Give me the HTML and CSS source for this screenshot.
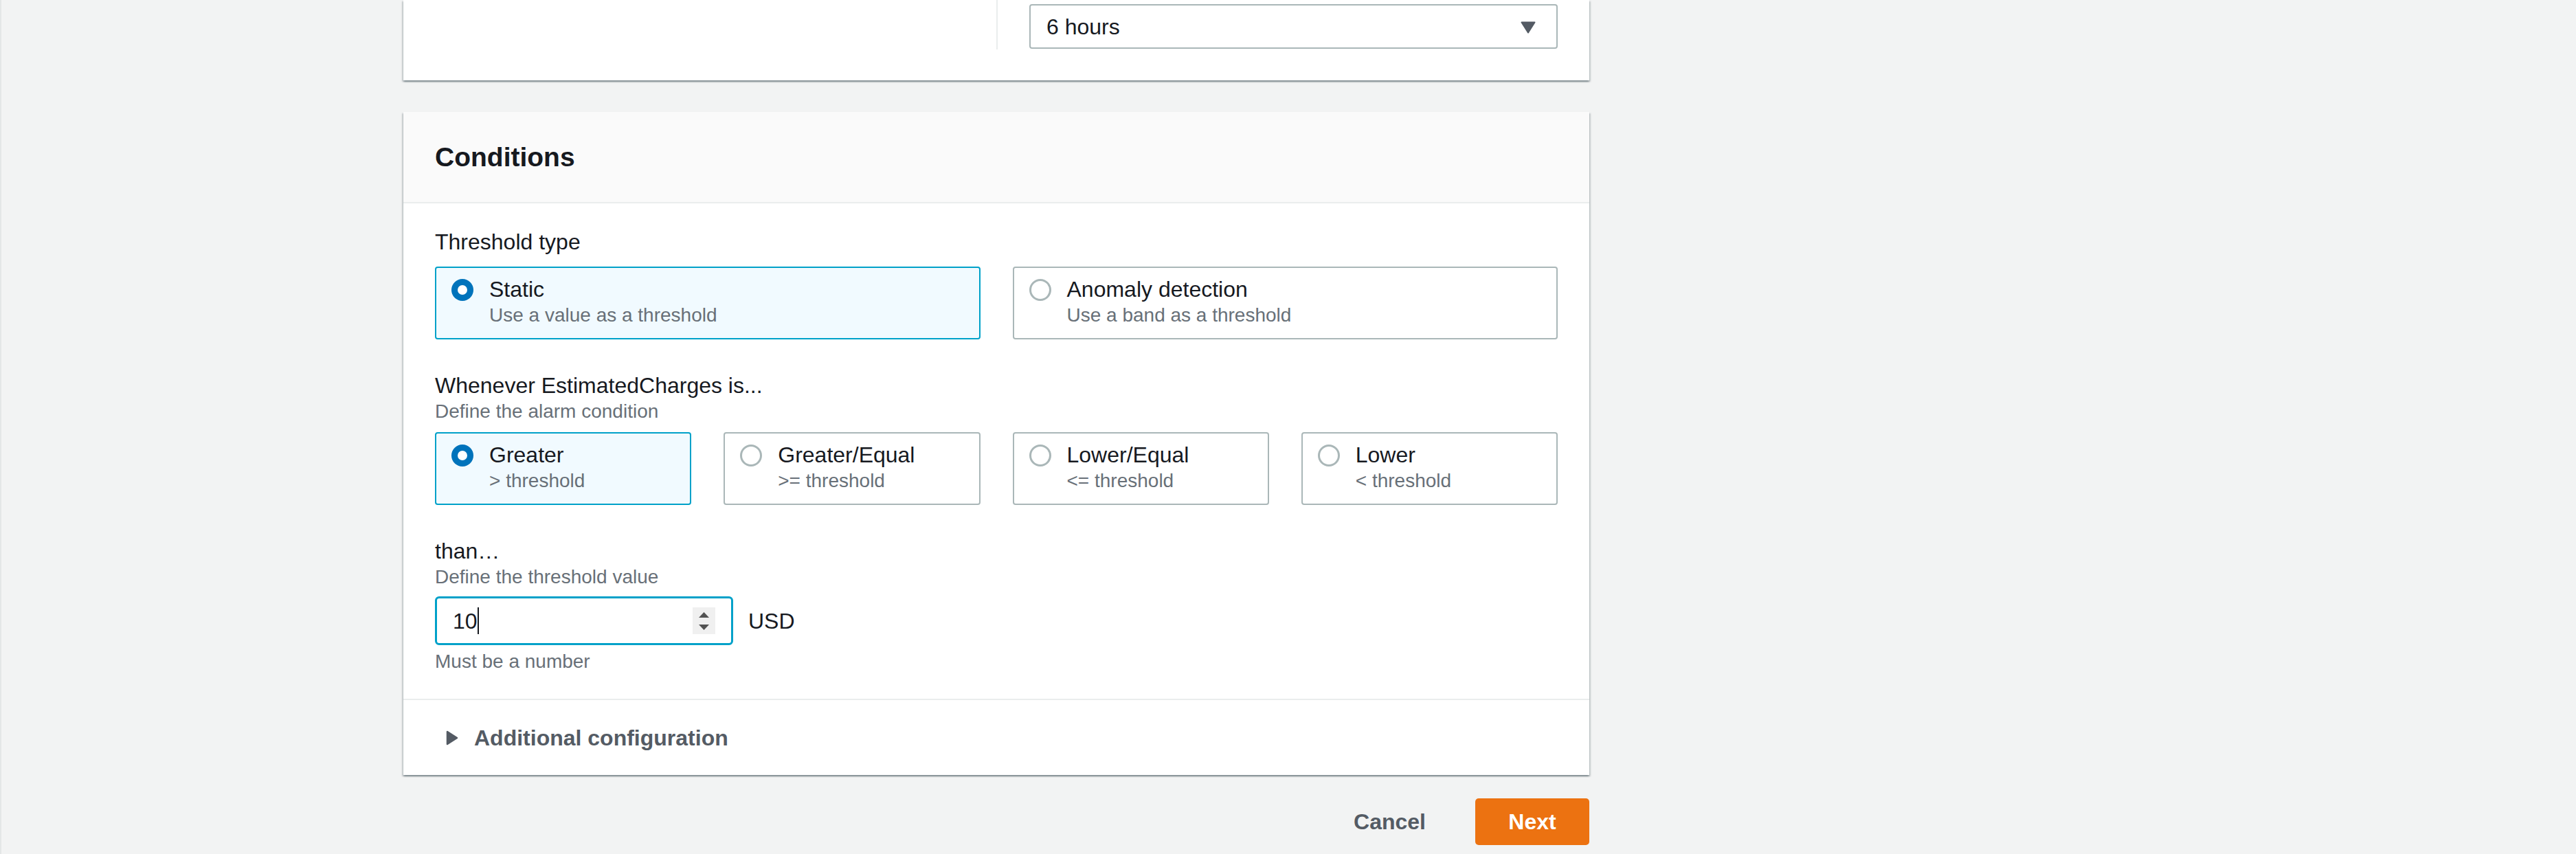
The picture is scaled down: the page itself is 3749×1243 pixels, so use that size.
FILE: index.html
```html
<!DOCTYPE html>
<html lang="en">
<head>
<meta charset="utf-8">
<title>Conditions</title>
<link rel="stylesheet" href="styles.css">
</head>
<body>
<div class="layout">
  <div class="nav-space"></div>
  <main class="main">
    <section class="card card-top">
      <div class="columns">
        <div class="col"></div>
        <div class="col col-divided">
          <div class="select">
            <span>6 hours</span>
            <svg class="select-arrow" viewBox="0 0 22 18" aria-hidden="true"><path d="M1.5 1.5 H20.5 L11 16.5 Z" fill="#545b64" stroke="#545b64" stroke-width="2" stroke-linejoin="round"/></svg>
          </div>
        </div>
      </div>
    </section>

    <section class="card card-conditions">
      <header class="card-header"><h2>Conditions</h2></header>
      <div class="card-body">
        <div class="field">
          <div class="label label-only">Threshold type</div>
          <div class="tiles tiles-2">
            <div class="tile selected">
              <span class="radio checked"></span>
              <div class="tile-text">
                <div class="tile-title">Static</div>
                <div class="tile-desc">Use a value as a threshold</div>
              </div>
            </div>
            <div class="tile">
              <span class="radio"></span>
              <div class="tile-text">
                <div class="tile-title">Anomaly detection</div>
                <div class="tile-desc">Use a band as a threshold</div>
              </div>
            </div>
          </div>
        </div>

        <div class="field">
          <div class="label">Whenever EstimatedCharges is...</div>
          <div class="desc desc-tiles">Define the alarm condition</div>
          <div class="tiles tiles-4">
            <div class="tile selected">
              <span class="radio checked"></span>
              <div class="tile-text">
                <div class="tile-title">Greater</div>
                <div class="tile-desc">&gt; threshold</div>
              </div>
            </div>
            <div class="tile">
              <span class="radio"></span>
              <div class="tile-text">
                <div class="tile-title">Greater/Equal</div>
                <div class="tile-desc">&gt;= threshold</div>
              </div>
            </div>
            <div class="tile">
              <span class="radio"></span>
              <div class="tile-text">
                <div class="tile-title">Lower/Equal</div>
                <div class="tile-desc">&lt;= threshold</div>
              </div>
            </div>
            <div class="tile">
              <span class="radio"></span>
              <div class="tile-text">
                <div class="tile-title">Lower</div>
                <div class="tile-desc">&lt; threshold</div>
              </div>
            </div>
          </div>
        </div>

        <div class="field">
          <div class="label">than…</div>
          <div class="desc desc-input">Define the threshold value</div>
          <div class="input-row">
            <div class="number-input">
              <span class="value">10</span><span class="caret"></span>
              <span class="spinner">
                <svg viewBox="0 0 15 8" class="spin-up" aria-hidden="true"><path d="M7.5 0 L15 8 H0 Z" fill="#525252"/></svg>
                <svg viewBox="0 0 15 8" class="spin-down" aria-hidden="true"><path d="M0 0 H15 L7.5 8 Z" fill="#525252"/></svg>
              </span>
            </div>
            <span class="unit">USD</span>
          </div>
          <div class="constraint">Must be a number</div>
        </div>
      </div>
      <div class="expander">
        <svg class="expander-icon" viewBox="0 0 18 22" aria-hidden="true"><path d="M2 2 L16 11 L2 20 Z" fill="#545b64" stroke="#545b64" stroke-width="2.5" stroke-linejoin="round"/></svg>
        <span class="expander-title">Additional configuration</span>
      </div>
    </section>

    <div class="actions">
      <button class="btn btn-link" type="button">Cancel</button>
      <button class="btn btn-primary" type="button">Next</button>
    </div>
  </main>
</div>
</body>
</html>
```

FILE: styles.css
```css
* { box-sizing: border-box; }

html, body {
  margin: 0;
  padding: 0;
  background: #f2f3f3;
  font-family: "Liberation Sans", Arial, sans-serif;
  color: #16191f;
  font-size: 32px;
}

.layout {
  display: flex;
  min-height: 1243px;
}

.nav-space {
  width: 587px;
  flex: none;
  border-left: 2px solid #e4e7e7;
}

.main {
  width: 1726px;
  flex: none;
  display: flex;
  flex-direction: column;
}

.card {
  background: #ffffff;
  box-shadow: 0 2px 2px 0 rgba(0, 28, 36, 0.3), 2px 2px 2px 0 rgba(0, 28, 36, 0.15), -2px 2px 2px 0 rgba(0, 28, 36, 0.15);
}

/* top (scrolled) card */
.card-top {
  padding: 0 46px 45px 46px;
}

.columns {
  display: grid;
  grid-template-columns: 1fr 1fr;
}

.col-divided {
  border-left: 2px solid #eaeded;
  padding: 6px 0 1px 46px;
}

.select {
  height: 65px;
  border: 2px solid #aab7b8;
  border-radius: 4px;
  display: flex;
  align-items: center;
  justify-content: space-between;
  padding: 0 30px 0 23px;
  line-height: 40px;
}

.select-arrow {
  width: 22px;
  height: 18px;
  display: block;
  margin-top: 2px;
}

/* conditions card */
.card-conditions {
  margin-top: 46px;
}

.card-header {
  height: 133px;
  background: #fafafa;
  border-bottom: 2px solid #eaeded;
  display: flex;
  align-items: center;
  padding: 0 46px;
}

.card-header h2 {
  margin: 0;
  font-size: 39px;
  font-weight: 700;
  line-height: 50px;
  color: #16191f;
}

.card-body {
  padding: 36px 46px 36px 46px;
}

.field + .field {
  margin-top: 47px;
}

.label {
  font-size: 32px;
  line-height: 40px;
  color: #16191f;
}

.label-only {
  margin-bottom: 16px;
}

.desc {
  font-size: 28px;
  line-height: 36px;
  color: #687078;
}

.desc-tiles {
  margin-bottom: 12px;
}

.desc-input {
  margin-bottom: 10px;
}

.tiles {
  display: grid;
  gap: 47px;
}

.tiles-2 { grid-template-columns: 1fr 1fr; }
.tiles-4 { grid-template-columns: repeat(4, 1fr); }

.tile {
  display: flex;
  align-items: flex-start;
  gap: 23px;
  border: 2px solid #aab7b8;
  border-radius: 4px;
  padding: 11px 20px 15px 22px;
  background: #ffffff;
}

.tile.selected {
  border-color: #00a1c9;
  background: #f1faff;
}

.radio {
  flex: none;
  width: 32px;
  height: 32px;
  margin-top: 5px;
  border-radius: 50%;
  border: 3px solid #aab7b8;
  background: #ffffff;
  position: relative;
}

.radio.checked {
  border: none;
  background: #0073bb;
}

.radio.checked::after {
  content: "";
  position: absolute;
  left: 9px;
  top: 9px;
  width: 14px;
  height: 14px;
  border-radius: 50%;
  background: #ffffff;
}

.tile-title {
  font-size: 32px;
  line-height: 40px;
  color: #16191f;
}

.tile-desc {
  font-size: 28px;
  line-height: 36px;
  color: #687078;
}

/* number input */
.input-row {
  display: flex;
  align-items: center;
  gap: 22px;
}

.number-input {
  width: 434px;
  height: 71px;
  border: 3px solid #00a1c9;
  border-radius: 6px;
  display: flex;
  align-items: center;
  padding: 0 23px 0 23px;
  background: #ffffff;
}

.value {
  font-size: 32px;
  line-height: 40px;
  color: #16191f;
}

.caret {
  width: 2px;
  height: 39px;
  background: #16191f;
}

.spinner {
  margin-left: auto;
  width: 33px;
  height: 39px;
  background: #f0f0f0;
  display: flex;
  flex-direction: column;
  align-items: center;
  justify-content: center;
  gap: 10px;
}

.spinner svg {
  width: 15px;
  height: 8px;
  display: block;
}

.unit {
  font-size: 32px;
  line-height: 40px;
  color: #16191f;
}

.constraint {
  margin-top: 6px;
  font-size: 28px;
  line-height: 36px;
  color: #687078;
}

/* expandable section */
.expander {
  border-top: 2px solid #eaeded;
  height: 111px;
  display: flex;
  align-items: center;
  gap: 23px;
  padding-left: 62px;
}

.expander-icon {
  width: 18px;
  height: 22px;
  display: block;
}

.expander-title {
  font-size: 32px;
  font-weight: 700;
  line-height: 40px;
  color: #545b64;
}

/* actions */
.actions {
  margin-top: 34px;
  display: flex;
  justify-content: flex-end;
  align-items: center;
  gap: 32px;
}

.btn {
  font-family: "Liberation Sans", Arial, sans-serif;
  font-size: 32px;
  font-weight: 700;
  height: 68px;
  border-radius: 5px;
  border: none;
  cursor: pointer;
}

.btn-link {
  background: transparent;
  color: #545b64;
  padding: 0 40px;
}

.btn-primary {
  background: #ec7211;
  color: #ffffff;
  width: 166px;
  padding: 0;
}
```
